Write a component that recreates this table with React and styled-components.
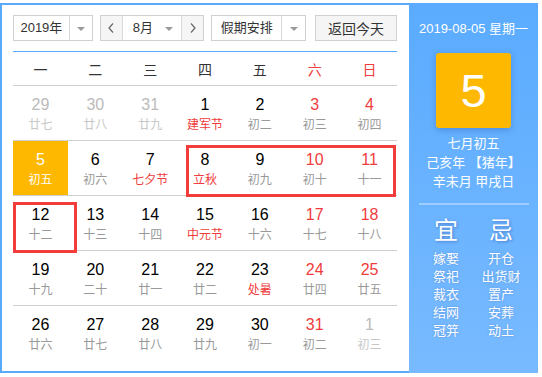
import React from "react";
import styled, { createGlobalStyle } from "styled-components";

const Global = createGlobalStyle`
  html, body { margin: 0; padding: 0; background: #fff; }
  body { font-family: "Liberation Sans", "Noto Sans CJK SC", sans-serif; }
  * { box-sizing: border-box; }
`;

const Frame = styled.div`
  margin-top: 3px;
  width: 538px;
  height: 370px;
  border: 2px solid #5aabff;
  border-right: none;
  display: flex;
`;

const Main = styled.div`
  width: 407px;
  padding: 10px 12px 0 11px;
  display: flex;
  flex-direction: column;
`;

const Toolbar = styled.div`
  display: flex;
  align-items: center;
  height: 26px;
  padding-bottom: 10px;
  border-bottom: 1px solid #5aabff;
  box-sizing: content-box;
`;

const Select = styled.div`
  display: flex;
  height: 26px;
  width: ${(p) => p.$w}px;
  margin-right: ${(p) => p.$mr}px;
  border: 1px solid #d0d0d0;
  background: #fff;
  font-size: 13px;
  color: #333;
`;

const SelText = styled.div`
  flex: 1;
  display: flex;
  align-items: center;
  justify-content: ${(p) => (p.$left ? "flex-start" : "center")};
  padding-left: ${(p) => (p.$left ? 10 : 0)}px;
  line-height: 24px;
`;

const Caret = styled.div`
  width: ${(p) => p.$w || 23}px;
  display: flex;
  align-items: center;
  justify-content: center;
  border-left: ${(p) => (p.$line ? "1px solid #d8d8d8" : "none")};
  &::after {
    content: "";
    border-left: 4px solid transparent;
    border-right: 4px solid transparent;
    border-top: 4px solid #999;
    margin-top: 1px;
  }
`;

const Arrow = styled.div`
  width: 22px;
  background: #f5f5f5;
  display: flex;
  align-items: center;
  justify-content: center;
  border-left: ${(p) => (p.$side === "r" ? "1px solid #d8d8d8" : "none")};
  border-right: ${(p) => (p.$side === "l" ? "1px solid #d8d8d8" : "none")};
`;

const TodayBtn = styled.div`
  width: 82px;
  height: 26px;
  border: 1px solid #d0d0d0;
  background: #f5f5f5;
  font-size: 14px;
  color: #333;
  display: flex;
  align-items: center;
  justify-content: center;
`;

const WeekRow = styled.div`
  display: grid;
  grid-template-columns: repeat(7, 1fr);
  height: 34px;
  border-bottom: 1px solid #d0d0d0;
`;

const WeekDay = styled.div`
  text-align: center;
  font-size: 14px;
  line-height: 20px;
  padding-top: 8px;
  color: ${(p) => (p.$red ? "#f03c3c" : "#333")};
`;

const Grid = styled.div`
  position: relative;
`;

const Row = styled.div`
  display: grid;
  grid-template-columns: repeat(7, 1fr);
  height: 55px;
  border-bottom: ${(p) => (p.$last ? "none" : "1px solid #d0d0d0")};
`;

const Cell = styled.div`
  display: flex;
  flex-direction: column;
  align-items: center;
  padding-top: 9px;
  background: ${(p) => (p.$today ? "#ffb800" : "transparent")};
`;

const colorFor = (t, today) => {
  if (today) return "#fff";
  if (t === "o") return "#bbb";
  if (t === "r") return "#f03c3c";
  return "#000";
};

const DayNum = styled.div`
  font-size: 16px;
  line-height: 20px;
  color: ${(p) => colorFor(p.$t, p.$today)};
`;

const Lunar = styled.div`
  font-size: 12px;
  line-height: 18px;
  margin-top: 1px;
  color: ${(p) =>
    p.$today ? "#fff" : p.$t === "r" ? "#f03c3c" : p.$t === "o" ? "#c8c8c8" : "#999"};
`;

const Mark = styled.div`
  position: absolute;
  border: 3px solid #f33c3c;
  left: ${(p) => p.$x}px;
  top: ${(p) => p.$y}px;
  width: ${(p) => p.$w}px;
  height: ${(p) => p.$h}px;
  pointer-events: none;
`;

const Side = styled.div`
  width: 129px;
  margin-top: -2px;
  height: 370px;
  background: linear-gradient(#5aabff, #78baff);
  color: #fff;
  display: flex;
  flex-direction: column;
  align-items: center;
`;

const SideDate = styled.div`
  font-size: 13px;
  line-height: 18px;
  margin-top: 17px;
`;

const BigDay = styled.div`
  width: 75px;
  height: 75px;
  margin-top: 15px;
  border-radius: 3px;
  background: #ffb800;
  box-shadow: 0 2px 6px rgba(40, 80, 160, 0.35);
  display: flex;
  align-items: center;
  justify-content: center;
  font-size: 47px;
  line-height: 1;
`;

const LunarInfo = styled.div`
  margin-top: 6px;
  font-size: 13px;
  line-height: 19px;
  text-align: center;
`;

const Divider = styled.div`
  width: 110px;
  height: 2px;
  margin-top: 12px;
  background: rgba(255, 255, 255, 0.35);
`;

const Omens = styled.div`
  display: flex;
  margin-top: 11px;
`;

const OmenCol = styled.div`
  width: 55px;
  display: flex;
  flex-direction: column;
  align-items: center;
`;

const OmenHead = styled.div`
  font-size: 24px;
  line-height: 30px;
  text-shadow: 1px 1px 3px rgba(30, 60, 140, 0.45);
  margin-bottom: 4px;
`;

const OmenItem = styled.div`
  font-size: 13px;
  line-height: 18px;
  text-shadow: 0 0 2px rgba(30, 60, 140, 0.3);
`;

const Chevron = ({ dir }) => (
  <svg width="8" height="12" viewBox="0 0 8 12">
    <polyline
      points={dir === "l" ? "6,1.5 2,6 6,10.5" : "2,1.5 6,6 2,10.5"}
      fill="none"
      stroke="#666"
      strokeWidth="1.2"
    />
  </svg>
);

const rows = [
  [["29", "廿七", "o", "o"], ["30", "廿八", "o", "o"], ["31", "廿九", "o", "o"], ["1", "建军节", "n", "r"], ["2", "初二", "n", "g"], ["3", "初三", "r", "g"], ["4", "初四", "r", "g"]],
  [["5", "初五", "n", "g", true], ["6", "初六", "n", "g"], ["7", "七夕节", "n", "r"], ["8", "立秋", "n", "r"], ["9", "初九", "n", "g"], ["10", "初十", "r", "g"], ["11", "十一", "r", "g"]],
  [["12", "十二", "n", "g"], ["13", "十三", "n", "g"], ["14", "十四", "n", "g"], ["15", "中元节", "n", "r"], ["16", "十六", "n", "g"], ["17", "十七", "r", "g"], ["18", "十八", "r", "g"]],
  [["19", "十九", "n", "g"], ["20", "二十", "n", "g"], ["21", "廿一", "n", "g"], ["22", "廿二", "n", "g"], ["23", "处暑", "n", "r"], ["24", "廿四", "r", "g"], ["25", "廿五", "r", "g"]],
  [["26", "廿六", "n", "g"], ["27", "廿七", "n", "g"], ["28", "廿八", "n", "g"], ["29", "廿九", "n", "g"], ["30", "初一", "n", "g"], ["31", "初二", "r", "g"], ["1", "初三", "o", "o"]],
];

const weekdays = ["一", "二", "三", "四", "五", "六", "日"];
const yi = ["嫁娶", "祭祀", "裁衣", "结网", "冠笄"];
const ji = ["开仓", "出货财", "置产", "安葬", "动土"];

export default function App() {
  return (
    <>
      <Global />
      <Frame>
        <Main>
          <Toolbar>
            <Select $w={80} $mr={7}>
              <SelText>2019年</SelText>
              <Caret $line />
            </Select>
            <Select $w={105} $mr={7}>
              <Arrow $side="l"><Chevron dir="l" /></Arrow>
              <SelText $left>8月</SelText>
              <Caret $w={24} />
              <Arrow $side="r"><Chevron dir="r" /></Arrow>
            </Select>
            <Select $w={95} $mr={9}>
              <SelText>假期安排</SelText>
              <Caret $line $w={24} />
            </Select>
            <TodayBtn>返回今天</TodayBtn>
          </Toolbar>
          <WeekRow>
            {weekdays.map((w, i) => (
              <WeekDay key={w} $red={i >= 5}>{w}</WeekDay>
            ))}
          </WeekRow>
          <Grid>
            {rows.map((r, ri) => (
              <Row key={ri} $last={ri === rows.length - 1}>
                {r.map(([d, l, nt, lt, today], ci) => (
                  <Cell key={ci} $today={today}>
                    <DayNum $t={nt} $today={today}>{d}</DayNum>
                    <Lunar $t={lt} $today={today}>{l}</Lunar>
                  </Cell>
                ))}
              </Row>
            ))}
            <Mark $x={173} $y={59} $w={210} $h={52} />
            <Mark $x={0} $y={116} $w={64} $h={51} />
          </Grid>
        </Main>
        <Side>
          <SideDate>2019-08-05 星期一</SideDate>
          <BigDay>5</BigDay>
          <LunarInfo>
            <div>七月初五</div>
            <div>己亥年 【猪年】</div>
            <div>辛未月 甲戌日</div>
          </LunarInfo>
          <Divider />
          <Omens>
            <OmenCol>
              <OmenHead>宜</OmenHead>
              {yi.map((t) => <OmenItem key={t}>{t}</OmenItem>)}
            </OmenCol>
            <OmenCol>
              <OmenHead>忌</OmenHead>
              {ji.map((t) => <OmenItem key={t}>{t}</OmenItem>)}
            </OmenCol>
          </Omens>
        </Side>
      </Frame>
    </>
  );
}
